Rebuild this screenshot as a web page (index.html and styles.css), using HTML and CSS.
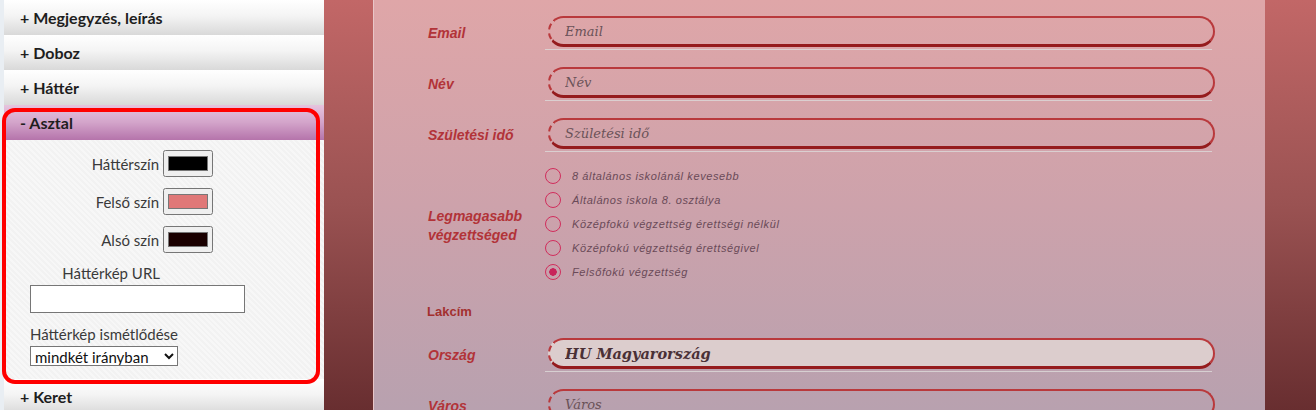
FILE: index.html
```html
<!DOCTYPE html>
<html lang="hu">
<head>
  <meta charset="UTF-8">
  <meta name="viewport" content="width=device-width, initial-scale=1.0">
  <title>Űrlap szerkesztő</title>
  <link rel="stylesheet" href="styles.css">
</head>
<body>
  <aside class="sidebar">
    <div class="acc-head">+ Megjegyzés, leírás</div>
    <div class="acc-head">+ Doboz</div>
    <div class="acc-head">+ Háttér</div>

    <section class="acc-open">
      <div class="acc-head active">- Asztal</div>
      <div class="acc-body">
        <div class="color-grid">
          <label for="bgColor">Háttérszín</label>
          <input type="color" id="bgColor" value="#000000">
          <label for="topColor">Felső szín</label>
          <input type="color" id="topColor" value="#e07878">
          <label for="bottomColor">Alsó szín</label>
          <input type="color" id="bottomColor" value="#1a0000">
        </div>
        <label class="url-label" for="bgUrl">Háttérkép URL</label>
        <input type="text" class="url-input" id="bgUrl">
        <label class="rep-label" for="bgRepeat">Háttérkép ismétlődése</label>
        <select class="rep-select" id="bgRepeat">
          <option>mindkét irányban</option>
          <option>vízszintesen</option>
          <option>függőlegesen</option>
          <option>nem ismétlődik</option>
        </select>
      </div>
    </section>

    <div class="acc-head">+ Keret</div>
  </aside>

  <main class="stage">
    <div class="panel">
      <div class="row">
        <label class="row-label">Email</label>
        <div class="field"><input type="text" placeholder="Email"></div>
      </div>
      <div class="row">
        <label class="row-label">Név</label>
        <div class="field"><input type="text" placeholder="Név"></div>
      </div>
      <div class="row">
        <label class="row-label">Születési idő</label>
        <div class="field"><input type="text" placeholder="Születési idő"></div>
      </div>

      <div class="row edu">
        <label class="row-label">Legmagasabb<br>végzettséged</label>
        <div class="radios">
          <label class="radio"><input type="radio" name="edu">8 általános iskolánál kevesebb</label>
          <label class="radio"><input type="radio" name="edu">Általános iskola 8. osztálya</label>
          <label class="radio"><input type="radio" name="edu">Középfokú végzettség érettségi nélkül</label>
          <label class="radio"><input type="radio" name="edu">Középfokú végzettség érettségivel</label>
          <label class="radio"><input type="radio" name="edu" checked>Felsőfokú végzettség</label>
        </div>
      </div>

      <div class="section-title">Lakcím</div>

      <div class="row">
        <label class="row-label">Ország</label>
        <div class="field"><input type="text" class="filled" value="HU Magyarország"></div>
      </div>
      <div class="row">
        <label class="row-label">Város</label>
        <div class="field"><input type="text" placeholder="Város"></div>
      </div>
    </div>
  </main>
</body>
</html>
```

FILE: styles.css
```css
:root {
  --side-font: 'Lato', 'Open Sans', sans-serif;
  --form-font: 'Liberation Sans', Arial, sans-serif;
  --field-font: 'DejaVu Serif', Georgia, serif;

  --label-red: #b23338;
  --border-red: #b9393c;
  --border-dark: #951b1d;
}

html, body {
  height: 100%;
}

body {
  margin: 0;
  display: flex;
  overflow: hidden;
  background: #e9eef3;
}

/* sidebar */

.sidebar {
  width: 320px;
  flex: none;
  border-left: 4px solid #e9eef3;
  background: #f6f6f6;
  font-family: var(--side-font);
  color: #3a3a3a;
}

.acc-head {
  height: 35px;
  line-height: 35px;
  padding-left: 16px;
  font-weight: 700;
  font-size: 16px;
  color: #1e1e1e;
  background: linear-gradient(#ffffff, #f4f4f4 45%, #d9d9d9);
}

.acc-head.active {
  background: linear-gradient(#e6c4de, #d3a4ca 50%, #b574ab);
}

.acc-open {
  position: relative;
}

.acc-open::after {
  content: "";
  position: absolute;
  left: -2px;
  top: 3px;
  width: 318px;
  bottom: -5px;
  box-sizing: border-box;
  border: 4px solid #ff0000;
  border-radius: 13px;
  z-index: 2;
  pointer-events: none;
}

.acc-body {
  padding: 10px 0 13px;
  background: repeating-linear-gradient(45deg, #f7f7f7 0 2px, #f2f2f2 2px 4px);
  font-size: 15px;
}

.color-grid {
  display: grid;
  grid-template-columns: 155px 50px;
  column-gap: 4px;
  row-gap: 11px;
  align-items: center;
}

.color-grid label {
  text-align: right;
}

.color-grid input {
  width: 50px;
  height: 27px;
  margin: 0;
}

.url-label {
  display: block;
  width: 156px;
  margin-top: 11px;
  line-height: 18px;
  text-align: right;
}

.url-input {
  display: block;
  box-sizing: border-box;
  width: 215px;
  height: 28px;
  margin: 3px 0 0 26px;
  border: 1px solid #767676;
  background: #fff;
}

.rep-label {
  display: block;
  margin: 12px 0 0 26px;
  line-height: 18px;
}

.rep-select {
  display: block;
  width: 148px;
  height: 20px;
  margin: 3px 0 0 26px;
  font-family: var(--side-font);
  font-size: 15px;
  color: #111;
  border: 1px solid #767676;
  border-radius: 0;
  background: #fff;
}

/* form stage */

.stage {
  flex: 1;
  padding-left: 49px;
  background: linear-gradient(#c26767, #9a5252 50%, #682e30);
}

.panel {
  width: 892px;
  height: 100%;
  box-sizing: border-box;
  padding: 16px 0 0 54px;
  border-left: 1px solid #e9c6c8;
  background: linear-gradient(#dfa6a8, #cda2ab 50%, #b8a1af);
}

.row {
  display: flex;
  align-items: center;
  margin-bottom: 17px;
}

.row-label {
  width: 120px;
  flex: none;
  font: italic 700 14px var(--form-font);
  color: var(--label-red);
}

.field {
  width: 667px;
  margin-left: -3px;
  padding-bottom: 2px;
  border-bottom: 1px solid rgba(220, 215, 215, 0.85);
}

.field input {
  display: block;
  box-sizing: border-box;
  width: 667px;
  height: 31px;
  margin-left: 3px;
  padding: 0 15px;
  border: 2px solid var(--border-red);
  border-bottom: 3px solid var(--border-dark);
  border-left-style: dashed;
  border-radius: 16px;
  background: transparent;
  font: italic 13px var(--field-font);
  color: #5c4046;
  outline: none;
}

.field input::placeholder {
  color: #6a5258;
  opacity: 1;
}

.field input.filled {
  background: #dccdcd;
  font-weight: 700;
  font-size: 14.5px;
  color: #4a3036;
}

.edu {
  margin-top: -5px;
  margin-bottom: 17px;
}

.edu .row-label {
  line-height: 19px;
  padding-top: 3px;
}

.radios {
  margin-left: -3px;
}

.radio {
  display: flex;
  align-items: center;
  height: 24px;
  font: italic 11px var(--form-font);
  letter-spacing: 0.6px;
  color: #6a4a58;
}

.radio input {
  appearance: none;
  width: 16px;
  height: 16px;
  margin: 0 11px 0 0;
  border: 1.5px solid #d12d5c;
  border-radius: 50%;
  background: transparent;
}

.radio input:checked {
  background: radial-gradient(circle, #c8235a 0 3.5px, transparent 4px);
}

.section-title {
  font: 700 13px var(--form-font);
  line-height: 20px;
  padding-top: 1px;
  margin: 0 0 16px -1px;
  color: #a3302f;
}
```
